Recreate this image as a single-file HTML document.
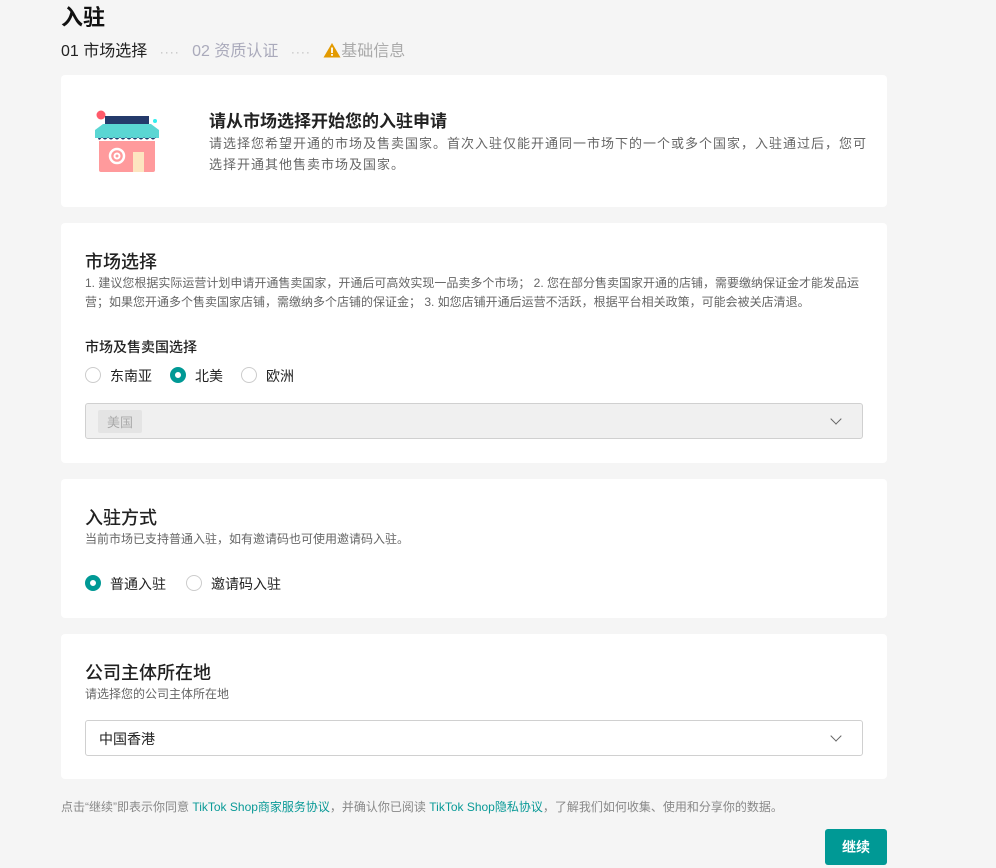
<!DOCTYPE html>
<html><head><meta charset="utf-8"><style>
*{box-sizing:border-box;margin:0;padding:0}
body{width:996px;height:868px;background:#f5f5f5;font-family:"Liberation Sans","Noto Sans CJK SC",sans-serif;color:#222;position:relative;overflow:hidden}
.abs{position:absolute}
.card{position:absolute;left:61px;width:826px;background:#fff;border-radius:4px}
.h{font-size:18px;font-weight:500;color:#222}
.sub{font-size:12px;color:#666;line-height:19px}
.radio{display:inline-block;width:16px;height:16px;border:1px solid #ccc;border-radius:50%;vertical-align:middle;margin-right:9px;position:relative;top:-1px;background:#fff}
.radio.on{border:5px solid #009995}
.rl{font-size:14px;color:#222;margin-right:18px;vertical-align:middle}
.sel{position:absolute;left:24px;width:778px;height:36px;border:1px solid #d0d0d0;border-radius:3px}
.chev{position:absolute;right:22px;top:11px;width:8px;height:8px;border-right:1.3px solid #666;border-bottom:1.3px solid #666;transform:rotate(45deg)}
a{color:#0a9a97;text-decoration:none}
</style></head><body>
<div class="abs" style="left:61px;top:0px;font-size:22px;font-weight:600;color:#111">入驻</div>
<div class="abs" style="left:61px;top:37px;font-size:16px;color:#222;white-space:nowrap">01 市场选择 <span style="color:#bbb;letter-spacing:1px;margin:0 8px;font-size:12px">····</span> <span style="color:#aab">02 资质认证</span> <span style="color:#bbb;letter-spacing:1px;margin:0 8px;font-size:12px">····</span> <svg width="18" height="16" viewBox="0 0 18 16" style="vertical-align:-2px"><path d="M9 1 L17.5 15.5 H0.5Z" fill="#e39a00"/><rect x="8.1" y="5.5" width="1.8" height="5.5" fill="#fff"/><rect x="8.1" y="12" width="1.8" height="1.8" fill="#fff"/></svg><span style="color:#aaa">基础信息</span></div>

<div class="card" style="top:75px;height:132px">
<svg class="abs" style="left:32px;top:35px" width="68" height="64" viewBox="0 0 68 64">
<circle cx="8" cy="5" r="4.5" fill="#ff5a6a"/>
<circle cx="62" cy="11" r="2" fill="#3ee"/>
<rect x="12" y="6" width="44" height="8" fill="#243a6b"/>
<path d="M2 20 L10 14 H58 L66 20 V28 H2Z" fill="#5ad6d3"/>
<path d="M5 28 H63 V27 Q60 32 57 27 Q54 32 51 27 Q48 32 45 27 Q42 32 39 27 Q36 32 33 27 Q30 32 27 27 Q24 32 21 27 Q18 32 15 27 Q12 32 9 27 Q6 32 5 28Z" fill="#243a6b"/>
<path d="M6 31 H62 V60 Q62 62 60 62 H8 Q6 62 6 60Z" fill="#ff9a9c"/>
<rect x="40" y="42" width="11" height="20" fill="#fde5c0"/>
<circle cx="24" cy="46" r="7" fill="none" stroke="#fff" stroke-width="2.5"/>
<circle cx="24" cy="46" r="2.5" fill="none" stroke="#fff" stroke-width="2"/>
</svg>
<div class="abs" style="left:148px;top:32px;font-size:17px;font-weight:600;color:#222">请从市场选择开始您的入驻申请</div>
<div class="abs sub" style="left:148px;top:58px;width:720px;font-size:13px;line-height:21px;letter-spacing:1px">请选择您希望开通的市场及售卖国家。首次入驻仅能开通同一市场下的一个或多个国家，入驻通过后，您可<br>选择开通其他售卖市场及国家。</div>
</div>

<div class="card" style="top:223px;height:240px">
<div class="abs h" style="left:24px;top:25px">市场选择</div>
<div class="abs sub" style="left:24px;top:51px;width:780px">1. 建议您根据实际运营计划申请开通售卖国家，开通后可高效实现一品卖多个市场； 2. 您在部分售卖国家开通的店铺，需要缴纳保证金才能发品运营；如果您开通多个售卖国家店铺，需缴纳多个店铺的保证金； 3. 如您店铺开通后运营不活跃，根据平台相关政策，可能会被关店清退。</div>
<div class="abs" style="left:24px;top:114px;font-size:14px;font-weight:500">市场及售卖国选择</div>
<div class="abs" style="left:24px;top:143px;white-space:nowrap"><span class="radio"></span><span class="rl">东南亚</span><span class="radio on"></span><span class="rl">北美</span><span class="radio"></span><span class="rl">欧洲</span></div>
<div class="sel" style="top:180px;background:#f0f0f0"><span class="abs" style="left:12px;top:6px;background:#e4e4e4;color:#aaa;font-size:13px;padding:2px 9px;border-radius:2px">美国</span><div class="chev"></div></div>
</div>

<div class="card" style="top:479px;height:139px">
<div class="abs h" style="left:24px;top:25px">入驻方式</div>
<div class="abs sub" style="left:24px;top:51px">当前市场已支持普通入驻，如有邀请码也可使用邀请码入驻。</div>
<div class="abs" style="left:24px;top:95px;white-space:nowrap"><span class="radio on"></span><span class="rl" style="margin-right:20px">普通入驻</span><span class="radio"></span><span class="rl">邀请码入驻</span></div>
</div>

<div class="card" style="top:634px;height:145px">
<div class="abs h" style="left:24px;top:25px">公司主体所在地</div>
<div class="abs sub" style="left:24px;top:51px">请选择您的公司主体所在地</div>
<div class="sel" style="top:86px;background:#fff"><span class="abs" style="left:13px;top:8px;font-size:14px">中国香港</span><div class="chev"></div></div>
</div>

<div class="abs" style="left:61px;top:798px;font-size:12px;color:#888;white-space:nowrap">点击“继续”即表示你同意 <a>TikTok Shop商家服务协议</a>，并确认你已阅读 <a>TikTok Shop隐私协议</a>，了解我们如何收集、使用和分享你的数据。</div>
<div class="abs" style="left:825px;top:829px;width:62px;height:36px;background:#009995;color:#fff;border-radius:3px;font-size:14px;font-weight:600;text-align:center;line-height:36px">继续</div>
</body></html>
